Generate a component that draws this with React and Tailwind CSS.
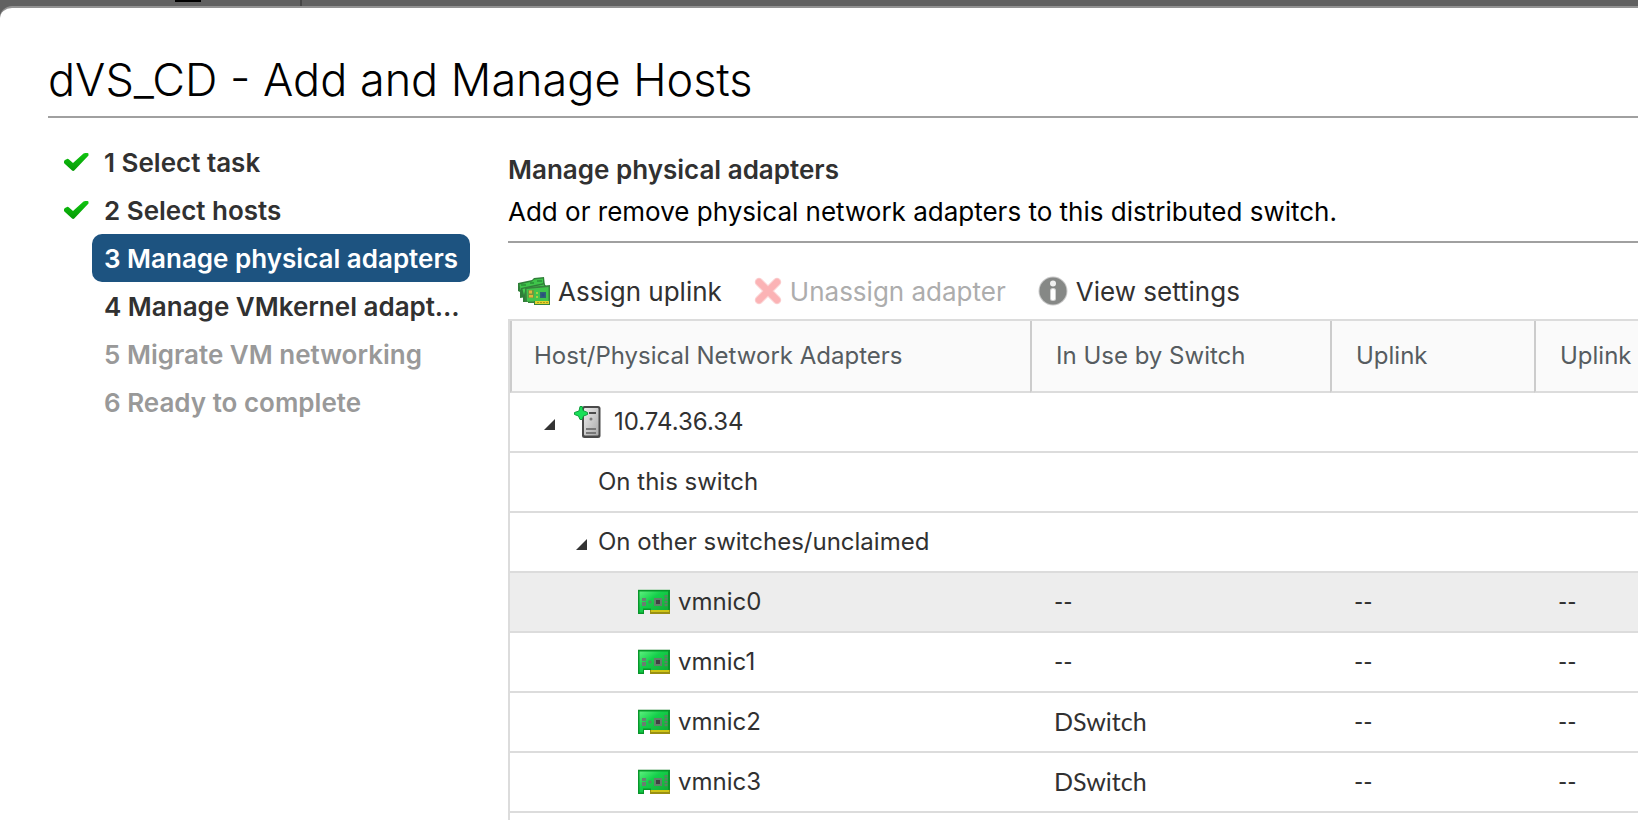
import React from "react";

function CheckIcon() {
  return (
    <svg width="26" height="22" viewBox="0 0 26 22" aria-hidden="true">
      <defs>
        <linearGradient id="check-fill" x1="0" y1="0" x2="0" y2="1">
          <stop offset="0" stopColor="#12c512" />
          <stop offset="1" stopColor="#049a04" />
        </linearGradient>
      </defs>
      <path
        d="M0 10.400Q0 9.600 1 9L3 8Q4 7.600 5 8.400L9 12 19.500 2.600Q20.300 2 21.300 2H23.400Q24.600 2 24.500 3.200V4.400L10.500 19.300Q9.200 20.600 7.800 19.300L.4 12.500Q0 12 0 11.400Z"
        fill="url(#check-fill)"
      />
    </svg>
  );
}

function AssignIcon() {
  return (
    <svg width="32" height="28" viewBox="0 0 32 28" aria-hidden="true">
      <path d="M0 6 14 3 16 1 26 0 27 9 9 20 2 21 2 15 0 14Z" fill="#2f7f38" />
      <path d="M1.500 7.500 14 4.500 16 2.500 25 1.500 25 7 4 12 2.500 13Z" fill="#3fc44a" />
      <path d="M3 8h5M12 6h4M19 4h5" stroke="#2a8f36" strokeWidth="1.500" />
      <path d="M3 11 26 6 28 9 28 18 8 25 5 25 5 19 3 18Z" fill="#2f7f38" />
      <path d="M4.500 12 26 7.500 26 10 7 14 6 18Z" fill="#46cc50" />
      <path d="M7 10.500 32 8V28H16V26H10V25H7Z" fill="#38823e" />
      <path d="M8.500 12 30.500 10V24H16V24.500H9Z" fill="#41c44b" />
      <path d="M10 13h6v8h-6z" fill="#6f9a3c" />
      <path d="M11 13.500h3v3h-3zM11 18h4v2.500h-4z" fill="#e2b43a" />
      <path d="M22 15h6v6h-6z" fill="#2f6474" />
      <path d="M23.500 16.500h3v3h-3z" fill="#2a4f80" />
      <path d="M18 15h2v2h-2zM18 19h2v2h-2z" fill="#a8cf3e" />
      <path d="M17 24h14v3H17z" fill="#e2d22c" />
      <path d="M19 25.500h11" stroke="#a99a1c" strokeWidth="1" strokeDasharray="2 1" />
    </svg>
  );
}

function CrossIcon() {
  return (
    <svg width="28" height="28" viewBox="0 0 28 28" aria-hidden="true">
      <path d="M5 5 23 23M23 5 5 23" stroke="#fbd3d4" strokeWidth="8.500" strokeLinecap="round" />
      <path d="M5 5 23 23M23 5 5 23" stroke="#fbb3b5" strokeWidth="6.500" strokeLinecap="round" />
    </svg>
  );
}

function InfoIcon() {
  return (
    <svg width="30" height="30" viewBox="0 0 30 30" aria-hidden="true">
      <circle cx="15" cy="15" r="14.500" fill="#c9c9c9" />
      <circle cx="15" cy="15" r="13.500" fill="#868886" />
      <circle cx="15" cy="7.500" r="3" fill="#f0f0f0" />
      <rect x="12" y="12" width="6" height="13" rx="2.500" fill="#d0d0d0" />
      <rect x="13" y="13" width="4" height="11" rx="1.500" fill="#fff" />
    </svg>
  );
}

function HostIcon() {
  return (
    <svg width="28" height="32" viewBox="0 0 28 32" aria-hidden="true">
      <defs>
        <linearGradient id="host-fill" x1="0" y1="0" x2="1" y2="1">
          <stop offset="0" stopColor="#ececec" />
          <stop offset="1" stopColor="#a9a9a9" />
        </linearGradient>
      </defs>
      <rect x="8" y="0" width="18.500" height="32" rx="2.500" fill="#4a4a4a" />
      <rect x="10" y="2" width="14.500" height="27.500" rx="1" fill="url(#host-fill)" />
      <path d="M15 7h7" stroke="#4c4c4c" strokeWidth="2" />
      <circle cx="17" cy="13" r="1.500" fill="#7a7a7a" />
      <path d="M12 23h10M12 27h10" stroke="#777" strokeWidth="1.800" />
      <path
        d="M6 .5h2.200L9 4.500 13.500 6.500v2L9.500 10 8 13.500H6L4.500 10 .5 8.500v-2L5 5Z"
        fill="#18e058"
        stroke="#0f9e3c"
        strokeWidth="1"
      />
    </svg>
  );
}

function NicIcon() {
  return (
    <svg width="32" height="26" viewBox="0 0 32 26" aria-hidden="true">
      <defs>
        <linearGradient id="nic-fill" x1="0" y1="0" x2="1" y2="1">
          <stop offset="0" stopColor="#5cf07e" />
          <stop offset=".4" stopColor="#14cf4a" />
          <stop offset="1" stopColor="#12a832" />
        </linearGradient>
      </defs>
      <path d="M0 .5H32" stroke="#bfdcc4" />
      <path d="M0 1H32V25H12V21H6V25H0Z" fill="#08962b" />
      <path d="M1.500 2.500H30V21H13V19.500H5V23.500H1.500Z" fill="url(#nic-fill)" />
      <path d="M12 21H32V25H12Z" fill="#9a9012" />
      <path d="M13 21H31V23H13Z" fill="#cfc416" />
      <path d="M4 9h4v3H4zM4 13h4v4H4z" fill="#6a7f70" />
      <circle cx="12" cy="13" r="1.800" fill="#4f8f5e" />
      <path d="M16 9h8v8h-8z" fill="#62806a" />
      <path d="M18 11h4v4h-4z" fill="#3f4342" />
      <path d="M28 6v12" stroke="#5d8064" strokeWidth="3" strokeDasharray="2.200 .8" />
    </svg>
  );
}

function Toggle({ label }) {
  return (
    <button type="button" aria-label={label} aria-expanded="true" className="flex h-8 w-4 items-center">
      <svg width="11" height="11" viewBox="0 0 11 11" className="mt-1" aria-hidden="true">
        <path d="M11 0V11H0Z" fill="#333" />
      </svg>
    </button>
  );
}

const steps = [
  { label: "1 Select task", state: "done" },
  { label: "2 Select hosts", state: "done" },
  { label: "3 Manage physical adapters", state: "current" },
  { label: "4 Manage VMkernel adapters", state: "open" },
  { label: "5 Migrate VM networking", state: "locked" },
  { label: "6 Ready to complete", state: "locked" },
];

const stepStyles = {
  done: "text-[#313131]",
  current: "bg-[#1d5380] text-white",
  open: "text-[#313131]",
  locked: "text-[#999]",
};

function Steps() {
  return (
    <nav aria-label="Wizard steps" className="w-[422px] shrink-0 pt-5">
      <ol>
        {steps.map(({ label, state }) => (
          <li key={label} className="flex h-12 items-center">
            <span className="w-11 shrink-0 pl-4">{state === "done" && <CheckIcon />}</span>
            <button
              type="button"
              disabled={state === "locked"}
              aria-current={state === "current" ? "step" : undefined}
              className={"h-12 w-[378px] truncate rounded-[10px] pr-2 pl-3 text-left text-[26px] font-semibold " + stepStyles[state]}
            >
              {label}
            </button>
          </li>
        ))}
      </ol>
    </nav>
  );
}

function Toolbar() {
  return (
    <div className="flex h-[76px] shrink-0 items-center gap-8 pt-5 pl-[10px] text-[26px] whitespace-nowrap text-[#313131]">
      <button type="button" className="flex items-center gap-2">
        <AssignIcon />
        Assign uplink
      </button>
      <button type="button" disabled className="flex items-center gap-2 text-[#adadad]">
        <CrossIcon />
        Unassign adapter
      </button>
      <button type="button" className="flex items-center gap-2">
        <InfoIcon />
        View settings
      </button>
    </div>
  );
}

const columns = ["Host/Physical Network Adapters", "In Use by Switch", "Uplink", "Uplink"];

const nics = [
  { name: "vmnic0", usedBy: "--", selected: true },
  { name: "vmnic1", usedBy: "--" },
  { name: "vmnic2", usedBy: "DSwitch" },
  { name: "vmnic3", usedBy: "DSwitch" },
];

const cell = "h-[60px] border-b-2 border-[#dcdcdc] p-0";
const valueCell = cell + " pl-6 font-[Lato] text-[25px]";

function AdapterTable() {
  return (
    <table className="w-full table-fixed border-separate border-spacing-0 text-left text-[#313131]">
      <colgroup>
        <col className="w-[520px]" />
        <col className="w-[300px]" />
        <col className="w-[204px]" />
        <col />
      </colgroup>
      <thead>
        <tr className="bg-[#fafafa]">
          {columns.map((name, i) => (
            <th
              key={i}
              scope="col"
              className="h-[72px] border-b-2 border-l-2 border-b-[#dcdcdc] border-l-[#ccc] p-0 pl-6 text-[24px] font-normal whitespace-nowrap text-[#565c60] first:pl-[22px]"
            >
              {name}
            </th>
          ))}
        </tr>
      </thead>
      <tbody className="text-[24px]">
        <tr>
          <td colSpan={4} className={cell}>
            <div className="flex items-center pl-[34px]">
              <Toggle label="Collapse 10.74.36.34" />
              <span className="mr-3 ml-[14px]"><HostIcon /></span>
              10.74.36.34
            </div>
          </td>
        </tr>
        <tr>
          <td colSpan={4} className={cell + " pl-[88px]"}>On this switch</td>
        </tr>
        <tr>
          <td colSpan={4} className={cell}>
            <div className="flex items-center gap-[6px] pl-[66px]">
              <Toggle label="Collapse On other switches/unclaimed" />
              On other switches/unclaimed
            </div>
          </td>
        </tr>
        {nics.map((nic) => (
          <tr key={nic.name} className={nic.selected ? "bg-[#ededed]" : ""}>
            <td className={cell}>
              <div className="flex items-center gap-2 pl-32">
                <NicIcon />
                {nic.name}
              </div>
            </td>
            <td className={valueCell}>{nic.usedBy}</td>
            <td className={valueCell}>--</td>
            <td className={valueCell}>--</td>
          </tr>
        ))}
      </tbody>
    </table>
  );
}

export default function App() {
  return (
    <div className="flex h-screen flex-col overflow-hidden bg-[#616161] font-[Inter,sans-serif]">
      <div className="flex h-[6px] shrink-0 items-start" aria-hidden="true">
        <div className="ml-[175px] h-[2px] w-[26px] bg-black" />
        <div className="ml-[99px] h-[6px] w-[2px] bg-[#464646]" />
      </div>
      <div className="flex min-h-0 flex-1 flex-col overflow-hidden rounded-tl-[12px] border-t-2 border-[#939393] bg-white pl-12">
        <h1 className="h-[110px] shrink-0 border-b-2 border-[#a0a0a0] pt-11 text-[45px] leading-[56px] font-light text-black">
          dVS_CD - Add and Manage Hosts
        </h1>
        <div className="flex min-h-0 flex-1">
          <Steps />
          <main className="ml-[38px] flex min-w-0 flex-1 flex-col">
            <header className="h-[125px] shrink-0 border-b-2 border-[#a0a0a0] pt-8">
              <h2 className="text-[26px] leading-[40px] font-semibold text-[#313131]">Manage physical adapters</h2>
              <p className="text-[26px] leading-[44px] text-black">
                Add or remove physical network adapters to this distributed switch.
              </p>
            </header>
            <Toolbar />
            <div className="min-h-0 flex-1 border-t-2 border-l-2 border-[#dcdcdc]">
              <AdapterTable />
            </div>
          </main>
        </div>
      </div>
    </div>
  );
}
